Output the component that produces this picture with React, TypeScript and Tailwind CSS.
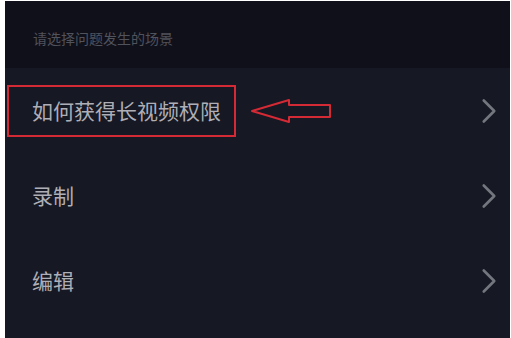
import { ChevronRight } from "lucide-react";

const rows = ["如何获得长视频权限", "录制", "编辑"];

export default function App() {
  return (
    <div
      className="h-[338px] w-[511px] overflow-hidden bg-white pl-[5px] pt-[1px] pr-[1px]"
      style={{ fontFamily: '"Noto Sans CJK SC", "Noto Sans", sans-serif' }}
    >
      <div className="flex h-full flex-col bg-[#161823]">
        <div className="flex h-[67px] shrink-0 items-center bg-[#10101a] pl-[28px] pt-[8px] text-[14px] text-[#50525c]">
          请选择问题发生的场景
        </div>
        <div className="flex flex-col">
          {rows.map((label, i) => (
            <div key={label} className="relative flex h-[85px] items-center justify-between pl-[27px] pr-0">
              {i === 0 ? (
                <div className="relative flex items-center">
                  <div className="-ml-[25px] flex h-[52px] w-[229px] items-center border-2 border-[#d42a35] pl-[23px] text-[21px] text-[#aeaeb6]">
                    {label}
                  </div>
                  <svg width="84" height="28" viewBox="0 0 84 28" className="ml-[13px]">
                    <path
                      d="M3 14 L40 3 L40 8 L81 8 L81 20 L40 20 L40 25 Z"
                      fill="none"
                      stroke="#d42a35"
                      strokeWidth="2"
                      strokeLinejoin="round"
                    />
                  </svg>
                </div>
              ) : (
                <div className="text-[21px] text-[#aeaeb6]">{label}</div>
              )}
              <ChevronRight size={42} strokeWidth={1.5} className="text-[#74767f]" />
            </div>
          ))}
        </div>
      </div>
    </div>
  );
}
